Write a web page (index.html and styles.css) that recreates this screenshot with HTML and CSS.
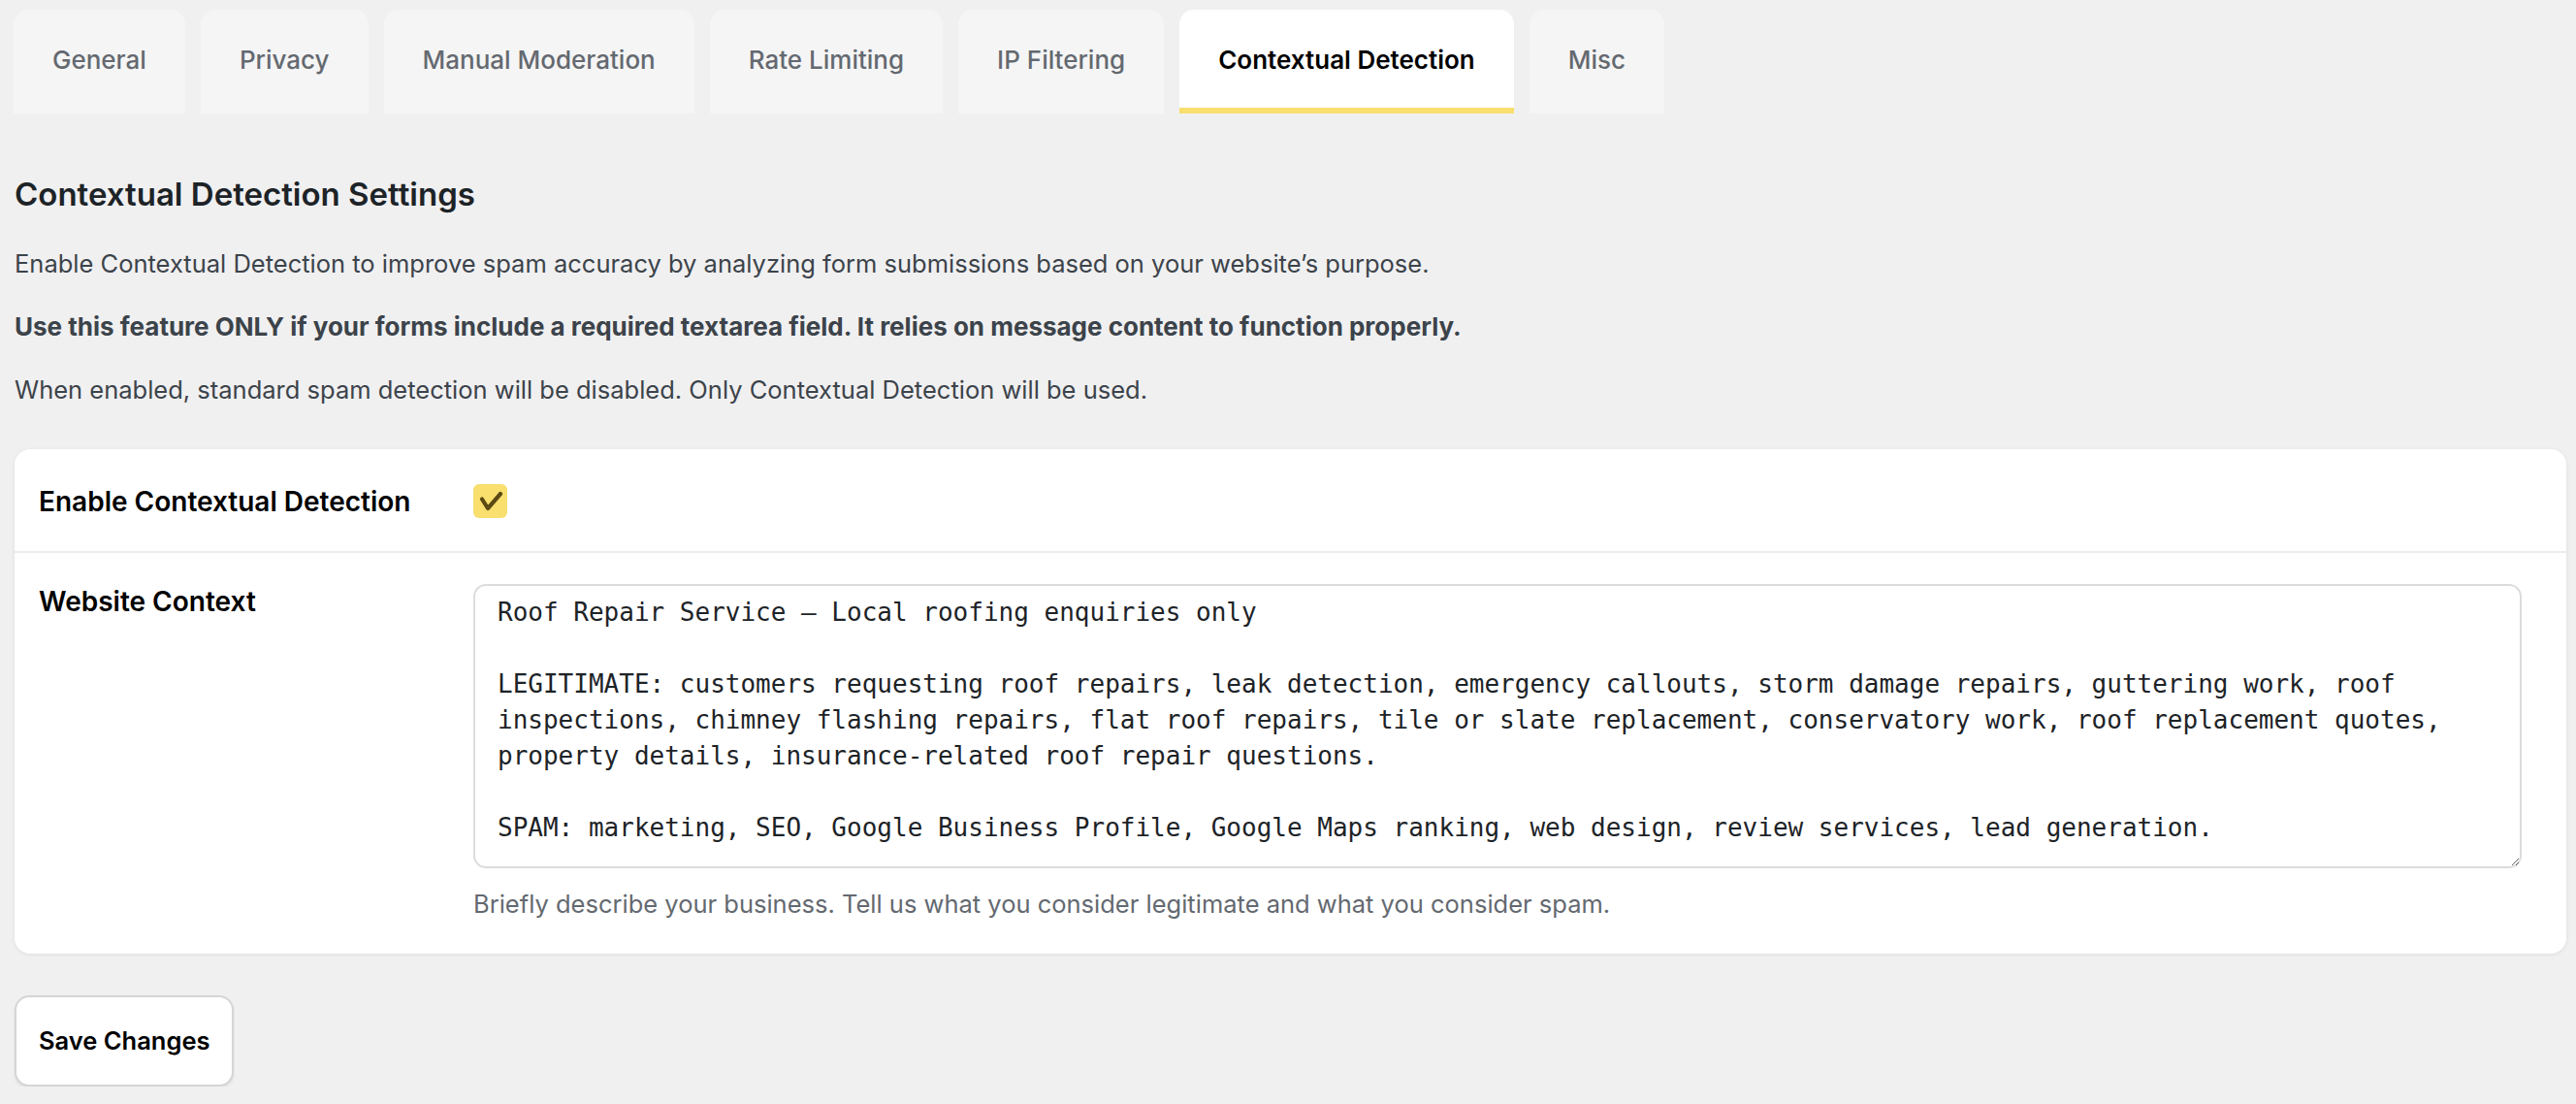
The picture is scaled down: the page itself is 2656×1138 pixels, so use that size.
FILE: index.html
```html
<!DOCTYPE html>
<html lang="en">
<head>
    <meta charset="UTF-8">
    <meta name="viewport" content="width=device-width, initial-scale=1.0">
    <title>Contextual Detection Settings</title>
    <link rel="stylesheet" href="styles.css">
</head>
<body>
    <div class="wrap">
        <nav class="tabs">
            <a class="tab" href="#">General</a>
            <a class="tab" href="#">Privacy</a>
            <a class="tab" href="#">Manual Moderation</a>
            <a class="tab" href="#">Rate Limiting</a>
            <a class="tab" href="#">IP Filtering</a>
            <a class="tab tab-active" href="#">Contextual Detection</a>
            <a class="tab" href="#">Misc</a>
        </nav>

        <h2 class="title">Contextual Detection Settings</h2>
        <p>Enable Contextual Detection to improve spam accuracy by analyzing form submissions based on your website’s purpose.</p>
        <p><strong>Use this feature ONLY if your forms include a required textarea field. It relies on message content to function properly.</strong></p>
        <p>When enabled, standard spam detection will be disabled. Only Contextual Detection will be used.</p>

        <div class="card">
            <div class="row row-first">
                <label class="row-label">Enable Contextual Detection</label>
                <div class="row-field">
                    <span class="check">
                        <svg width="35" height="35" viewBox="0 0 35 35">
                            <path d="M9 15.5 L15 25 L28 10" fill="none" stroke="#5a4913" stroke-width="4.2" stroke-linecap="round" stroke-linejoin="round"/>
                        </svg>
                    </span>
                </div>
            </div>
            <div class="row">
                <label class="row-label">Website Context</label>
                <div class="row-field">
                    <textarea class="context" wrap="off">Roof Repair Service – Local roofing enquiries only

LEGITIMATE: customers requesting roof repairs, leak detection, emergency callouts, storm damage repairs, guttering work, roof
inspections, chimney flashing repairs, flat roof repairs, tile or slate replacement, conservatory work, roof replacement quotes,
property details, insurance-related roof repair questions.

SPAM: marketing, SEO, Google Business Profile, Google Maps ranking, web design, review services, lead generation.</textarea>
                    <p class="description">Briefly describe your business. Tell us what you consider legitimate and what you consider spam.</p>
                </div>
            </div>
        </div>

        <button class="save">Save Changes</button>
    </div>
</body>
</html>
```

FILE: styles.css
```css
body {
    margin: 0;
    background-color: #f0f0f1;
    font-family: Inter, "Noto Sans", sans-serif;
    color: #3c434a;
}

.wrap {
    padding: 10px 10px 0 15px;
}

.tabs {
    display: flex;
    gap: 16px;
    margin-left: -1px;
}

.tab {
    display: flex;
    align-items: center;
    height: 107px;
    box-sizing: border-box;
    padding: 2px 40px 0;
    background-color: #f5f5f5;
    border-bottom: 6px solid transparent;
    border-radius: 15px 15px 0 0;
    font-size: 26px;
    font-weight: 500;
    color: #646970;
    text-decoration: none;
}

.tab-active {
    background-color: #fff;
    border-bottom-color: #f8df6e;
    color: #000;
    font-weight: 600;
}

.title {
    margin: 61px 0 30px;
    font-size: 33px;
    line-height: 44px;
    font-weight: 600;
    color: #1d2327;
}

p {
    margin: 0 0 26px;
    font-size: 25.5px;
    line-height: 39px;
}

strong {
    font-size: 26px;
    font-weight: 700;
}

.card {
    margin: 42px 0 0;
    background-color: #fff;
    border-radius: 16px;
    box-shadow: 0 1px 4px rgba(0, 0, 0, 0.08);
}

.row {
    display: grid;
    grid-template-columns: 448px 1fr;
    padding: 32px 46px 32px 25px;
}

.row-first {
    padding: 36px 46px 33px 25px;
    border-bottom: 2px solid #ececec;
}

.row-label {
    font-size: 28px;
    line-height: 36px;
    font-weight: 600;
    color: #000;
}

.check {
    display: block;
    width: 35px;
    height: 35px;
    border-radius: 6px;
    background-color: #f8df6e;
}

.check svg {
    display: block;
}

.context {
    display: block;
    width: 100%;
    height: 293px;
    box-sizing: border-box;
    padding: 9px 20px 9px 23px;
    border: 2px solid #dcdcde;
    border-radius: 13px;
    font-family: "DejaVu Sans Mono", "Liberation Mono", monospace;
    font-size: 26px;
    line-height: 37px;
    color: #1d2327;
    background-color: #fff;
    overflow: hidden;
}

.description {
    margin: 17px 0 0;
    font-size: 25.5px;
    line-height: 39px;
    color: #646970;
}

.save {
    margin: 43px 0 0;
    padding: 27px 23px;
    background-color: #fff;
    border: 2px solid #d5d5d5;
    border-radius: 15px;
    box-shadow: 0 2px 3px rgba(0, 0, 0, 0.08);
    font-family: Inter, "Noto Sans", sans-serif;
    font-size: 25.5px;
    line-height: 36px;
    font-weight: 600;
    color: #000;
    cursor: pointer;
}
```
